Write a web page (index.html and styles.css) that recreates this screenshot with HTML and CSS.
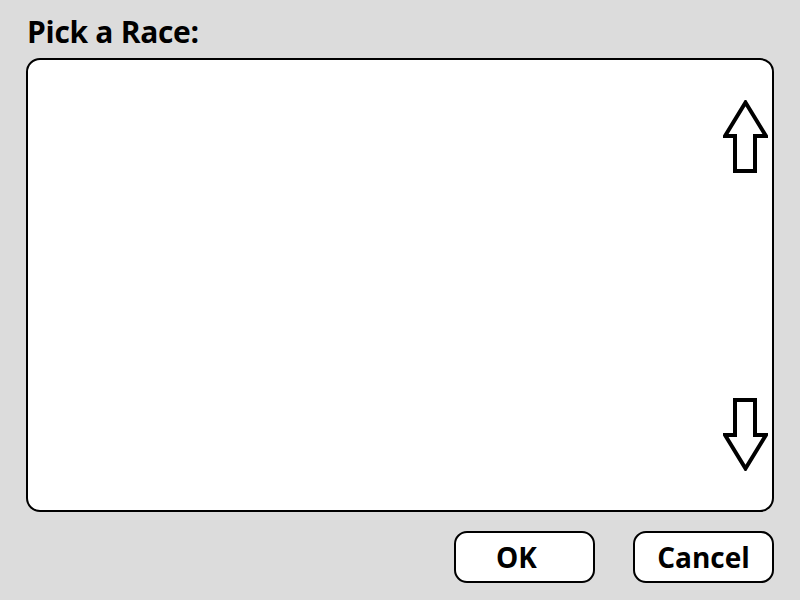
FILE: index.html
```html
<!DOCTYPE html>
<html>
<head>
<meta charset="utf-8">
<link rel="stylesheet" href="styles.css">
</head>
<body>
<div class="dialog">
  <h1 class="title">Pick a Race:</h1>
  <div class="listbox">
    <div class="list"></div>
    <div class="scroll">
      <svg class="arrow" width="45" height="73" viewBox="0 0 45 73"><polygon points="22.5,2.5 43,36 32,36 32,71 12,71 12,36 2,36" fill="none" stroke="#000" stroke-width="4" stroke-linejoin="miter"/></svg>
      <svg class="arrow" width="45" height="73" viewBox="0 0 45 73"><polygon points="22.5,70.5 43,37 32,37 32,2 12,2 12,37 2,37" fill="none" stroke="#000" stroke-width="4" stroke-linejoin="miter"/></svg>
    </div>
  </div>
  <div class="buttons">
    <button class="btn btn-ok">OK</button>
    <button class="btn">Cancel</button>
  </div>
</div>
</body>
</html>
```
FILE: styles.css
```css
html, body {
  margin: 0;
  padding: 0;
  background: #dcdcdc;
  width: 800px;
  height: 600px;
  overflow: hidden;
}
.dialog {
  padding: 14px 26px 0 26px;
  font-family: "Open Sans", "DejaVu Sans", sans-serif;
}
.title {
  margin: 0 0 0 1px;
  font-size: 30px;
  font-weight: 700;
  line-height: 36px;
  height: 44px;
  letter-spacing: -0.3px;
  color: #000;
}
.listbox {
  box-sizing: border-box;
  height: 454px;
  width: 748px;
  background: #fff;
  border: 2px solid #000;
  border-radius: 14px;
  display: flex;
}
.list {
  flex: 1;
}
.scroll {
  display: flex;
  flex-direction: column;
  justify-content: space-between;
  padding: 40px 4px 39px 0;
}
.arrow {
  display: block;
}
.buttons {
  display: flex;
  justify-content: flex-end;
  gap: 38px;
  margin-top: 19px;
}
.btn {
  box-sizing: border-box;
  width: 141px;
  height: 52px;
  background: #fff;
  border: 2px solid #000;
  border-radius: 13px;
  font-family: "Open Sans", "DejaVu Sans", sans-serif;
  font-size: 28px;
  font-weight: 700;
  color: #000;
  padding: 0;
}
.btn-ok {
  padding-right: 16px;
}
```
